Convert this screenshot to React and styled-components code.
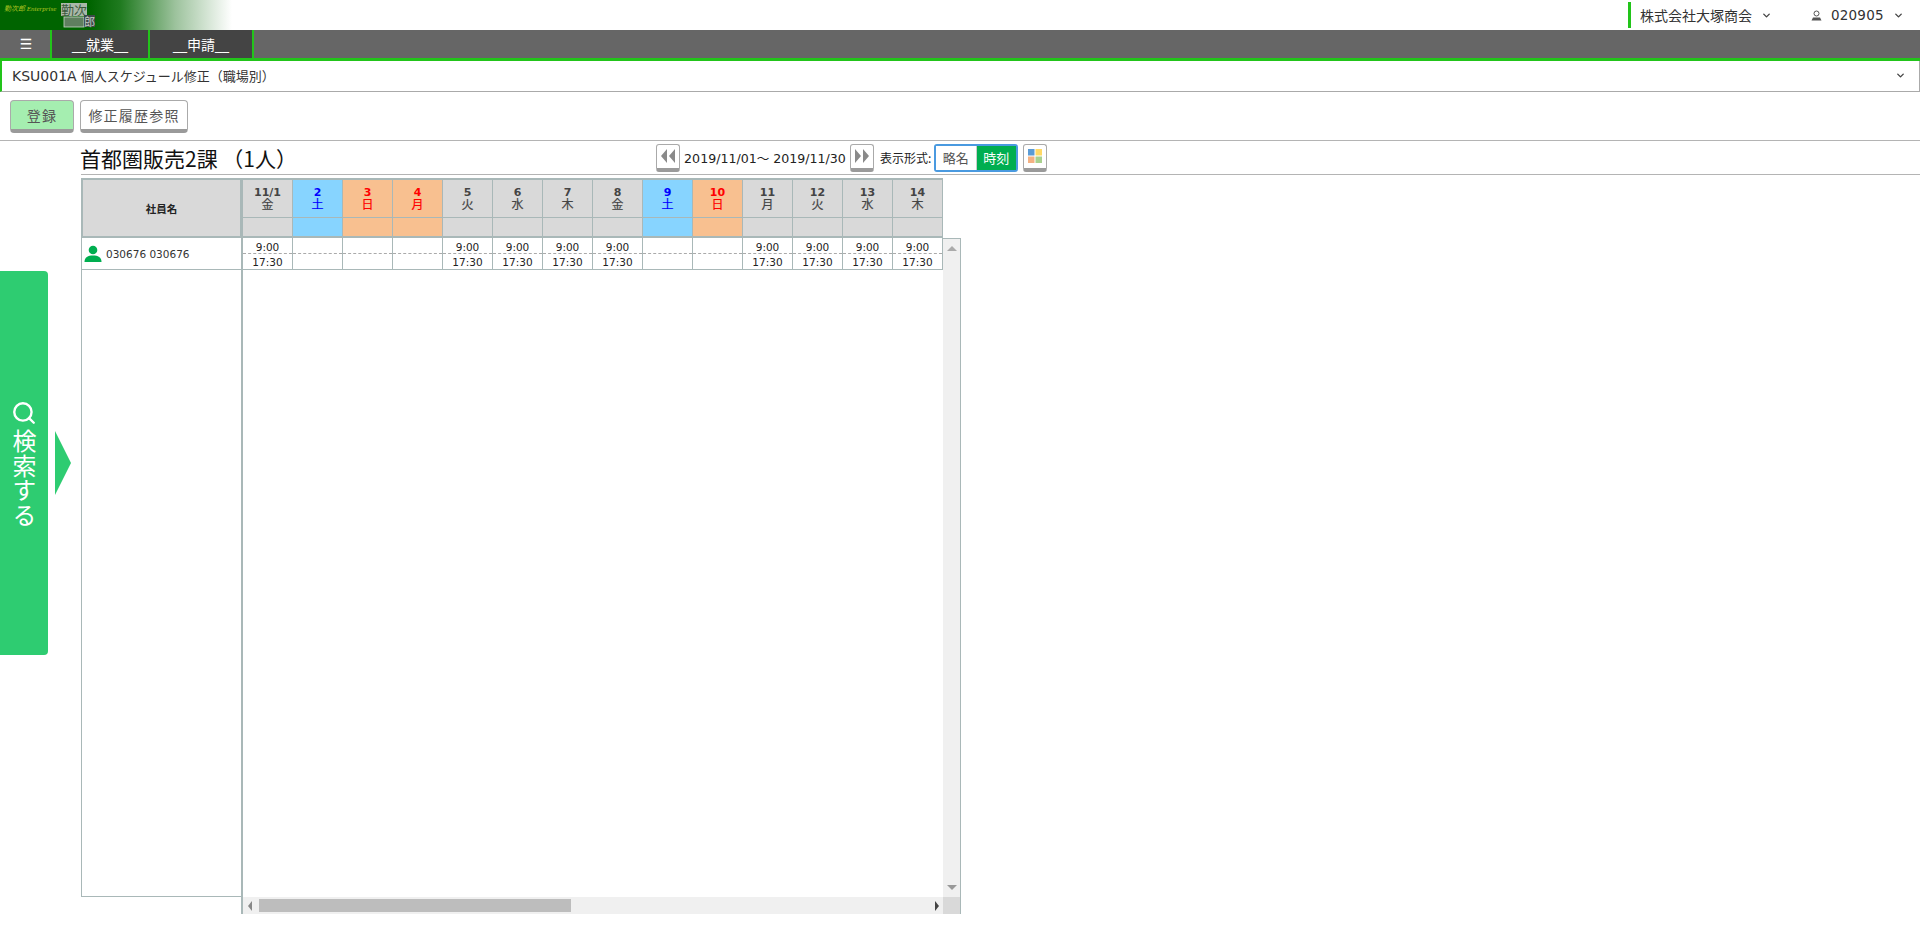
import React from 'react';
import styled, { createGlobalStyle } from 'styled-components';
import { ChevronDown, Search } from 'lucide-react';

const Global = createGlobalStyle`
  html, body { margin: 0; padding: 0; height: 925px; overflow: hidden; background: #fff; }
  body { font-family: "DejaVu Sans", "Noto Sans CJK JP", sans-serif; color: #222; }
  * { box-sizing: border-box; }
`;

const Page = styled.div`
  width: 1920px;
  height: 925px;
  display: flex;
  flex-direction: column;
  overflow: hidden;
`;

const Header = styled.header`
  height: 30px;
  display: flex;
  align-items: stretch;
`;

const Logo = styled.div`
  width: 234px;
  height: 30px;
  display: flex;
  background: linear-gradient(90deg, #006400 0, #006400 90px, #1f7a1f 120px, #9cc29c 175px, #ffffff 232px);
`;

const LogoCaption = styled.span`
  font-family: "Liberation Serif", "Noto Sans CJK JP", serif;
  font-size: 7px;
  line-height: 8px;
  margin: 5px 0 0 4px;
  width: 57px;
  white-space: nowrap;
  color: #b0c420;
  font-style: italic;
`;

const CompanyBlock = styled.div`
  margin-left: auto;
  margin-top: 2px;
  height: 26px;
  width: 155px;
  display: flex;
  align-items: center;
  border-left: 3px solid #22c41a;
  padding-left: 9px;
  font-size: 14px;
  color: #333;
  gap: 9px;
  white-space: nowrap;
`;

const UserBlock = styled.div`
  width: 109px;
  margin-left: 28px;
  display: flex;
  align-items: center;
  font-size: 13.5px;
  color: #333;
  letter-spacing: 0.2px;
`;

const UserText = styled.span`
  margin: 0 9px 0 9px;
`;

const Chev = styled(ChevronDown)`
  width: 11px;
  height: 11px;
  color: #444;
  stroke-width: 3;
  flex: none;
`;

const NavBar = styled.nav`
  height: 31px;
  background: #666;
  border-bottom: 3px solid #22c41a;
  display: flex;
  padding-left: 2px;
`;

const NavItem = styled.div`
  width: ${p => p.$w}px;
  background: ${p => (p.$dark ? '#444' : '#666')};
  border-right: 2px solid #22c41a;
  color: #fff;
  font-size: 14px;
  display: flex;
  align-items: center;
  justify-content: center;
  white-space: nowrap;
`;

const TitleBar = styled.div`
  height: 31px;
  border-left: 2px solid #22c41a;
  border-right: 1px solid #aaa;
  border-bottom: 1px solid #aaa;
  display: flex;
  align-items: center;
  justify-content: space-between;
  padding: 0 13px 2px 10px;
  font-size: 13px;
  color: #333;
`;

const ScreenCode = styled.span`
  font-size: 14px;
  margin-right: 4px;
`;

const ButtonBar = styled.div`
  height: 49px;
  padding: 8px 0 0 10px;
  display: flex;
  gap: 6px;
  border-bottom: 1px solid #b4b4b4;
  align-items: flex-start;
`;

const ActionButton = styled.button`
  height: 33px;
  width: ${p => p.$w}px;
  padding: 0;
  border: 1px solid #aaa;
  border-bottom: 4px solid #9a9a9a;
  border-radius: 4px;
  background: ${p => (p.$primary ? '#a5eeb0' : '#fff')};
  color: #555;
  font: inherit;
  font-size: 14px;
  letter-spacing: 1.2px;
`;

const Main = styled.main`
  flex: 1;
  display: flex;
  min-height: 0;
`;

const Rail = styled.aside`
  width: 81px;
  flex: none;
  height: 514px;
  padding-top: 130px;
  display: flex;
  align-items: center;
  gap: 7px;
`;

const RailTab = styled.div`
  width: 48px;
  height: 384px;
  background: #2ecc71;
  border-radius: 0 4px 4px 0;
  color: #fff;
  display: flex;
  flex-direction: column;
  align-items: center;
  justify-content: center;
  gap: 3px;
`;

const RailText = styled.span`
  writing-mode: vertical-rl;
  font-family: "Noto Sans CJK JP", sans-serif;
  font-size: 24px;
  line-height: 24px;
  letter-spacing: 0.5px;
`;

const RailArrow = styled.div`
  width: 0;
  height: 0;
  border-left: 16px solid #2ecc71;
  border-top: 32px solid transparent;
  border-bottom: 32px solid transparent;
`;

const Content = styled.section`
  flex: 1;
  display: flex;
  flex-direction: column;
  min-width: 0;
`;

const Toolbar = styled.div`
  height: 34px;
  display: flex;
  align-items: center;
  border-bottom: 1px solid #b4b4b4;
`;

const Heading = styled.h1`
  width: 575px;
  margin: 0;
  text-indent: -1px;
  font-weight: 400;
  font-family: "Noto Sans CJK JP", sans-serif;
  font-size: 21px;
  line-height: 32px;
  color: #111;
  white-space: nowrap;
`;

const IconButton = styled.button`
  width: 24px;
  height: 28px;
  padding: 0;
  border: 1px solid #aaa;
  border-bottom: 4px solid #9a9a9a;
  border-radius: 3px;
  background: #fff;
  display: flex;
  align-items: center;
  justify-content: center;
  flex: none;
`;

const DateRange = styled.span`
  width: 170px;
  text-align: center;
  font-size: 12.6px;
  white-space: nowrap;
  color: #222;
`;

const Label = styled.span`
  margin-left: 6px;
  width: 54px;
  font-size: 12px;
  font-family: "Noto Sans CJK JP", sans-serif;
  color: #222;
  white-space: nowrap;
`;

const Toggle = styled.div`
  width: 84px;
  height: 28px;
  border: 2px solid #4a9ae0;
  border-radius: 3px;
  display: flex;
  flex: none;
`;

const ToggleOption = styled.div`
  flex: 1;
  display: flex;
  align-items: center;
  justify-content: center;
  font-family: "Noto Sans CJK JP", sans-serif;
  font-size: 13px;
  background: ${p => (p.$on ? '#00ae50' : '#fff')};
  color: ${p => (p.$on ? '#fff' : '#555')};
  border-left: ${p => (p.$on ? '1px solid #ccc' : 'none')};
`;

const PaletteButton = styled(IconButton)`
  margin-left: 5px;
`;

const Board = styled.div`
  margin-top: 3px;
  display: flex;
  flex-direction: column;
`;

const HeadRow = styled.div`
  display: flex;
  height: 60px;
`;

const NameHead = styled.div`
  width: 162px;
  background: #d9d9d9;
  border: 2px solid #a9b8b8;
  border-right-width: 3px;
  display: flex;
  align-items: center;
  justify-content: center;
  font-family: "Noto Sans CJK JP", sans-serif;
  font-size: 10.5px;
  font-weight: 700;
  color: #222;
`;

const DayHead = styled.div`
  width: 50px;
  display: flex;
  flex-direction: column;
  background: ${p => p.$bg};
  color: ${p => p.$fg};
  border-top: 2px solid #a9b8b8;
  border-right: 1px solid #a9b8b8;
  border-bottom: 2px solid #a9b8b8;
`;

const DayLabel = styled.div`
  height: 38px;
  padding-top: 6px;
  text-align: center;
  font-size: 11px;
  line-height: 13px;
  font-weight: 700;
  border-bottom: 1px solid #a9b8b8;
`;

const Weekday = styled.div`
  font-size: 12px;
  font-weight: 400;
  line-height: 13px;
  -webkit-text-stroke: 0.2px currentColor;
`;

const DaySlot = styled.div`
  flex: 1;
`;

const BodyRow = styled.div`
  display: flex;
  align-items: flex-start;
`;

const NameColumn = styled.div`
  width: 160px;
  height: 659px;
  border-left: 1px solid #a9b8b8;
  border-bottom: 1px solid #a9b8b8;
`;

const NameCell = styled.div`
  height: 32px;
  display: flex;
  align-items: center;
  padding-left: 2px;
  gap: 4px;
  font-size: 10.5px;
  color: #333;
  border-bottom: 1px solid #a9b8b8;
`;

const Schedule = styled.div`
  width: 720px;
  height: 676px;
  display: grid;
  grid-template-columns: 700px 17px 1px;
  grid-template-rows: 659px 17px;
  border-left: 2px solid #a9b8b8;
`;

const Cells = styled.div`
  display: flex;
  align-items: flex-start;
`;

const TimeCell = styled.div`
  width: 50px;
  height: 32px;
  border-right: 1px solid #a9b8b8;
  border-bottom: 1px solid #a9b8b8;
  display: flex;
  flex-direction: column;
  font-size: 10.5px;
  text-align: center;
  color: #222;
`;

const TimeLine = styled.div`
  height: ${p => (p.$top ? 16 : 15)}px;
  line-height: 13px;
  padding-top: ${p => (p.$top ? 3 : 2)}px;
  white-space: nowrap;
  border-bottom: ${p => (p.$top ? '1px dashed #aaa' : 'none')};
`;

const VScroll = styled.div`
  background: #f0f0f0;
  border-top: 1px solid #a9b8b8;
  display: flex;
  flex-direction: column;
  align-items: center;
  justify-content: space-between;
  padding: 7px 0;
`;

const HScroll = styled.div`
  background: #f0f0f0;
  display: flex;
  align-items: center;
  justify-content: space-between;
  padding: 0 4px 0 5px;
`;

const HThumbRow = styled.div`
  flex: 1;
  height: 13px;
  margin: 0 0 0 7px;
  display: flex;
`;

const HThumb = styled.div`
  width: 312px;
  background: #bdbdbd;
`;

const Corner = styled.div`
  background: #d9d9d9;
`;

const EdgeLine = styled.div`
  background: #a9b8b8;
  grid-row: 1 / span 2;
  grid-column: 3;
`;

const Tri = styled.span`
  width: 0;
  height: 0;
  display: block;
  ${p => p.$dir === 'up' && `border-left:5px solid transparent;border-right:5px solid transparent;border-bottom:5px solid #aaa;`}
  ${p => p.$dir === 'down' && `border-left:5px solid transparent;border-right:5px solid transparent;border-top:5px solid #999;`}
  ${p => p.$dir === 'left' && `border-top:5px solid transparent;border-bottom:5px solid transparent;border-right:4px solid #888;`}
  ${p => p.$dir === 'right' && `border-top:5px solid transparent;border-bottom:5px solid transparent;border-left:4px solid #444;`}
`;

const GREY = ['#d9d9d9', '#444'];
const BLUE = ['#87d4ff', '#0000ff'];
const ORANGE = ['#f8c090', '#ff0000'];

const days = [
  ['11/1', '金', GREY, 1], ['2', '土', BLUE, 0], ['3', '日', ORANGE, 0], ['4', '月', ORANGE, 0],
  ['5', '火', GREY, 1], ['6', '水', GREY, 1], ['7', '木', GREY, 1], ['8', '金', GREY, 1],
  ['9', '土', BLUE, 0], ['10', '日', ORANGE, 0], ['11', '月', GREY, 1], ['12', '火', GREY, 1],
  ['13', '水', GREY, 1], ['14', '木', GREY, 1],
];

const PersonIcon = () => (
  <svg width="18" height="18" viewBox="0 0 18 18">
    <circle cx="9" cy="5" r="4.3" fill="#00ae50" />
    <path d="M0.5 17 C0.5 12 4 10.5 9 10.5 C14 10.5 17.5 12 17.5 17 Z" fill="#00ae50" />
  </svg>
);

const SmallUserIcon = () => (
  <svg width="11" height="11" viewBox="0 0 11 11">
    <circle cx="5.5" cy="3.5" r="2.5" fill="none" stroke="#555" strokeWidth="1" />
    <path d="M0.5 10.5 L2 7.5 H9 L10.5 10.5 Z" fill="#555" />
  </svg>
);

const DoubleArrow = ({ dir }) => (
  <svg width="16" height="16" viewBox="0 0 16 16">
    {dir === 'left' ? (
      <path d="M7 1 L1 8 L7 15 Z M15 1 L9 8 L15 15 Z" fill="#8a8a8a" />
    ) : (
      <path d="M1 1 L7 8 L1 15 Z M9 1 L15 8 L9 15 Z" fill="#8a8a8a" />
    )}
  </svg>
);

const PaletteIcon = () => (
  <svg width="14" height="14" viewBox="0 0 14 14">
    <rect x="0" y="0" width="6.5" height="6.5" fill="#5b9bd5" />
    <rect x="7.5" y="0" width="6.5" height="6.5" fill="#ffd966" />
    <rect x="0" y="7.5" width="6.5" height="6.5" fill="#f4b183" />
    <rect x="7.5" y="7.5" width="6.5" height="6.5" fill="#a9d18e" />
  </svg>
);

const LogoMark = () => (
  <svg width="36" height="30" viewBox="0 0 36 30">
    <rect x="0" y="3" width="26" height="13" fill="#a9b8a9" />
    <text x="0" y="15" fontSize="13" fontFamily="Noto Sans CJK JP" fill="#3d5a3d">勤次</text>
    <rect x="3" y="17" width="20" height="10" fill="#5f7f5f" stroke="#c9d6c9" strokeWidth="0.8" />
    <rect x="23" y="15" width="11" height="12" fill="#3c4a4a" />
    <text x="23" y="26" fontSize="11" fontFamily="Noto Sans CJK JP" fill="#c4ccc4">郎</text>
  </svg>
);

export default function App() {
  return (
    <Page>
      <Global />
      <Header>
        <Logo>
          <LogoCaption>勤次郎 Enterprise</LogoCaption>
          <LogoMark />
        </Logo>
        <CompanyBlock>株式会社大塚商会<Chev /></CompanyBlock>
        <UserBlock><SmallUserIcon /><UserText>020905</UserText><Chev /></UserBlock>
      </Header>
      <NavBar>
        <NavItem $w={50}>☰</NavItem>
        <NavItem $w={98} $dark>__就業__</NavItem>
        <NavItem $w={104} $dark>__申請__</NavItem>
      </NavBar>
      <TitleBar>
        <span><ScreenCode>KSU001A</ScreenCode>個人スケジュール修正（職場別）</span>
        <Chev />
      </TitleBar>
      <ButtonBar>
        <ActionButton $primary $w={64}>登録</ActionButton>
        <ActionButton $w={108}>修正履歴参照</ActionButton>
      </ButtonBar>
      <Main>
        <Rail>
          <RailTab>
            <Search size={26} strokeWidth={2.2} />
            <RailText>検索する</RailText>
          </RailTab>
          <RailArrow />
        </Rail>
        <Content>
          <Toolbar>
            <Heading>首都圏販売2課 （1人）</Heading>
            <IconButton><DoubleArrow dir="left" /></IconButton>
            <DateRange>2019/11/01～ 2019/11/30</DateRange>
            <IconButton><DoubleArrow dir="right" /></IconButton>
            <Label>表示形式:</Label>
            <Toggle>
              <ToggleOption>略名</ToggleOption>
              <ToggleOption $on>時刻</ToggleOption>
            </Toggle>
            <PaletteButton><PaletteIcon /></PaletteButton>
          </Toolbar>
          <Board>
            <HeadRow>
              <NameHead>社員名</NameHead>
              {days.map(([d, w, c]) => (
                <DayHead key={d} $bg={c[0]} $fg={c[1]}>
                  <DayLabel>{d}<Weekday>{w}</Weekday></DayLabel>
                  <DaySlot />
                </DayHead>
              ))}
            </HeadRow>
            <BodyRow>
              <NameColumn>
                <NameCell><PersonIcon />030676 030676</NameCell>
              </NameColumn>
              <Schedule>
                <Cells>
                  {days.map(([d, , , work]) => (
                    <TimeCell key={d}>
                      <TimeLine $top>{work ? '9:00' : ''}</TimeLine>
                      <TimeLine>{work ? '17:30' : ''}</TimeLine>
                    </TimeCell>
                  ))}
                </Cells>
                <VScroll><Tri $dir="up" /><Tri $dir="down" /></VScroll>
                <EdgeLine />
                <HScroll>
                  <Tri $dir="left" />
                  <HThumbRow><HThumb /></HThumbRow>
                  <Tri $dir="right" />
                </HScroll>
                <Corner />
              </Schedule>
            </BodyRow>
          </Board>
        </Content>
      </Main>
    </Page>
  );
}
